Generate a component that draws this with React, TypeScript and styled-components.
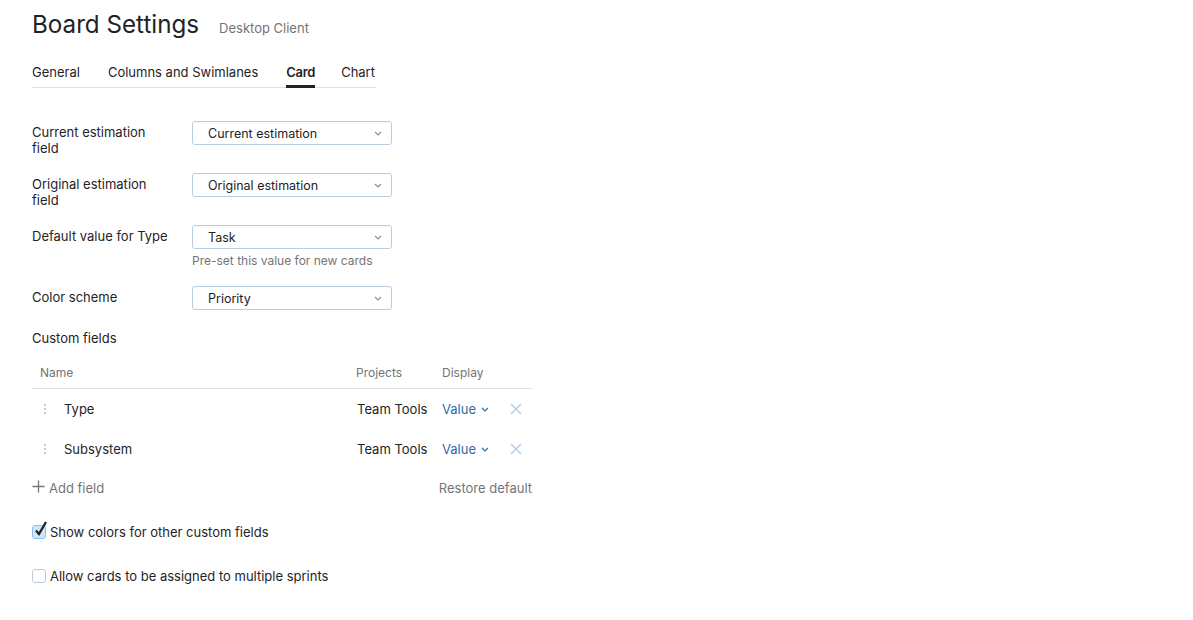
import React from "react";
import styled, { createGlobalStyle } from "styled-components";

const Global = createGlobalStyle`
  html, body { margin: 0; padding: 0; background: #fff; }
  body { font-family: Inter, "Noto Sans", sans-serif; color: #1f2326; -webkit-font-smoothing: antialiased; }
  * { box-sizing: border-box; }
`;

const Page = styled.div`
  padding: 9px 32px 0 32px;
  width: 1193px;
  height: 620px;
`;

const Header = styled.div`
  display: flex;
  align-items: baseline;
  gap: 20px;
`;

const Title = styled.h1`
  margin: 0;
  font-size: 24.2px;
  font-weight: 400;
  line-height: 32px;
  color: #1f2326;
`;

const Subtitle = styled.span`
  font-size: 13px;
  color: #737577;
`;

const Tabs = styled.div`
  display: flex;
  gap: 28px;
  width: 344px;
  margin-top: 18px;
  border-bottom: 1px solid #dfe1e3;
`;

const Tab = styled.div<{ $active?: boolean }>`
  position: relative;
  flex-shrink: 0;
  white-space: nowrap;
  font-size: 13px;
  line-height: 16px;
  padding: 5px 0 7px 0;
  font-weight: ${(p) => (p.$active ? 600 : 400)};
  letter-spacing: ${(p) => (p.$active ? "-0.3px" : "0")};
  margin-right: ${(p) => (p.$active ? "-2px" : "0")};
  color: #1f2326;
  &::after {
    content: "";
    display: ${(p) => (p.$active ? "block" : "none")};
    position: absolute;
    left: 0;
    right: 0;
    bottom: -1px;
    height: 3px;
    background: #1f2326;
  }
`;

const Form = styled.div`
  margin-top: 33px;
  display: flex;
  flex-direction: column;
  gap: 17px;
`;

const Row = styled.div`
  display: grid;
  grid-template-columns: 140px 200px;
  column-gap: 20px;
  align-items: start;
`;

const Label = styled.div`
  font-size: 13px;
  line-height: 16px;
  padding-top: 3px;
  color: #1f2326;
`;

const FieldCol = styled.div`
  display: flex;
  flex-direction: column;
`;

const Select = styled.div`
  height: 24px;
  width: 200px;
  border: 1px solid #b6cde3;
  border-radius: 3px;
  display: flex;
  align-items: center;
  justify-content: space-between;
  padding: 0 9px 0 15px;
  font-size: 12.5px;
  color: #1f2326;
`;

const Hint = styled.div`
  margin-top: 4px;
  font-size: 12px;
  line-height: 16px;
  color: #737577;
`;

const SectionLabel = styled.div`
  margin-top: 3px;
  font-size: 13px;
  line-height: 16px;
`;

const Table = styled.div`
  width: 500px;
  margin-top: 15px;
`;

const HeadRow = styled.div`
  display: grid;
  grid-template-columns: 324px 86px 60px 28px;
  height: 28px;
  align-items: center;
  border-bottom: 1px solid #dfe1e3;
  font-size: 12px;
  color: #737577;
  padding-bottom: 4px;
  & > :first-child { padding-left: 8px; }
`;

const BodyRow = styled.div`
  display: grid;
  grid-template-columns: 324px 86px 60px 28px;
  height: 40px;
  align-items: center;
  font-size: 13px;
`;

const NameCell = styled.div`
  display: flex;
  align-items: center;
  gap: 18px;
  padding-left: 12px;
`;

const Handle = styled.span`
  display: flex;
  flex-direction: column;
  gap: 2px;
  width: 2px;
  & > i { display: block; width: 2px; height: 2px; background: #b8cde2; }
`;

const Cell = styled.div`
  font-size: 13px;
  color: #1f2326;
  padding-left: 1px;
`;

const ValueCell = styled.div`
  display: flex;
  align-items: center;
  gap: 5px;
  color: #2f6aa8;
  font-size: 13px;
`;

const Remove = styled.div`
  display: flex;
  justify-content: center;
`;

const Footer = styled.div`
  display: flex;
  justify-content: space-between;
  align-items: center;
  height: 38px;
  font-size: 13px;
  color: #737577;
`;

const AddField = styled.div`
  display: flex;
  align-items: center;
  gap: 4px;
  & > svg { margin-top: -4px; }
`;

const Checks = styled.div`
  margin-top: 17px;
  display: flex;
  flex-direction: column;
  gap: 28px;
`;

const CheckRow = styled.label`
  display: flex;
  align-items: center;
  gap: 4px;
  font-size: 13px;
  line-height: 16px;
  color: #1f2326;
`;

const Box = styled.span<{ $checked?: boolean }>`
  position: relative;
  width: 14px;
  height: 14px;
  border-radius: 3px;
  border: 1px solid ${(p) => (p.$checked ? "#8fbff0" : "#b6cde3")};
  background: ${(p) => (p.$checked ? "#cfe6fd" : "#fff")};
  & > svg { position: absolute; left: 1px; top: -5px; }
`;

const Chevron = ({ color = "#8a8d90" }: { color?: string }) => (
  <svg width="8" height="5" viewBox="0 0 8 5" fill="none">
    <path d="M1 1l3 3 3-3" stroke={color} strokeWidth="1.1" />
  </svg>
);

const fields = [
  { label: "Current estimation field", value: "Current estimation" },
  { label: "Original estimation field", value: "Original estimation" },
  { label: "Default value for Type", value: "Task", hint: "Pre-set this value for new cards" },
  { label: "Color scheme", value: "Priority" },
];

const custom = ["Type", "Subsystem"];

export default function App() {
  return (
    <Page>
      <Global />
      <Header>
        <Title>Board Settings</Title>
        <Subtitle>Desktop Client</Subtitle>
      </Header>
      <Tabs>
        <Tab>General</Tab>
        <Tab>Columns and Swimlanes</Tab>
        <Tab $active>Card</Tab>
        <Tab>Chart</Tab>
      </Tabs>
      <Form>
        {fields.map((f) => (
          <Row key={f.label}>
            <Label>{f.label}</Label>
            <FieldCol>
              <Select>
                <span>{f.value}</span>
                <Chevron />
              </Select>
              {f.hint && <Hint>{f.hint}</Hint>}
            </FieldCol>
          </Row>
        ))}
        <SectionLabel>Custom fields</SectionLabel>
      </Form>
      <Table>
        <HeadRow>
          <div>Name</div>
          <div>Projects</div>
          <div>Display</div>
          <div />
        </HeadRow>
        {custom.map((c) => (
          <BodyRow key={c}>
            <NameCell>
              <Handle>
                <i />
                <i />
                <i />
              </Handle>
              <span>{c}</span>
            </NameCell>
            <Cell>Team Tools</Cell>
            <ValueCell>
              Value
              <Chevron color="#2f6aa8" />
            </ValueCell>
            <Remove>
              <svg width="12" height="12" viewBox="0 0 12 12" fill="none">
                <path d="M1 1l10 10M11 1L1 11" stroke="#b3cbe3" strokeWidth="1.4" />
              </svg>
            </Remove>
          </BodyRow>
        ))}
        <Footer>
          <AddField>
            <svg width="13" height="13" viewBox="0 0 13 13" fill="none">
              <path d="M6.5 0.5v12M0.5 6.5h12" stroke="#737577" strokeWidth="1.3" />
            </svg>
            <span>Add field</span>
          </AddField>
          <span>Restore default</span>
        </Footer>
      </Table>
      <Checks>
        <CheckRow>
          <Box $checked>
            <svg width="14" height="16" viewBox="0 0 14 16" fill="none">
              <path d="M2 9.5l3 3.5 7-12" stroke="#1f2326" strokeWidth="2.3" />
            </svg>
          </Box>
          Show colors for other custom fields
        </CheckRow>
        <CheckRow>
          <Box />
          Allow cards to be assigned to multiple sprints
        </CheckRow>
      </Checks>
    </Page>
  );
}
